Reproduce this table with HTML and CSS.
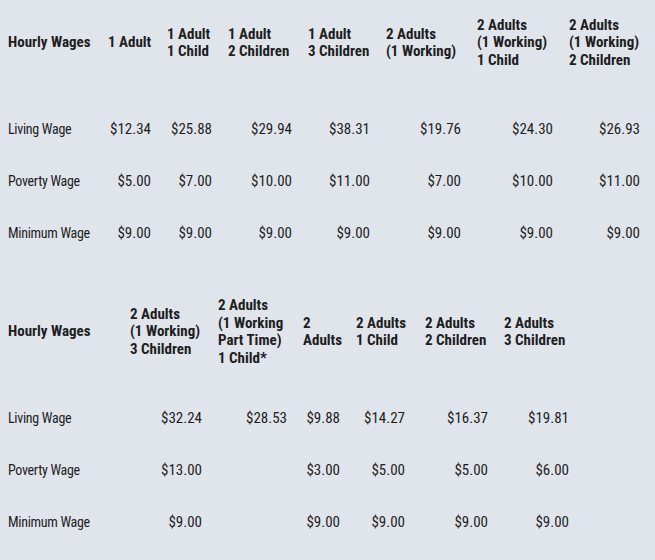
FILE: index.html
```html
<!DOCTYPE html>
<html lang="en">
<head>
<meta charset="utf-8">
<title>Hourly Wages</title>
<link rel="stylesheet" href="styles.css">
</head>
<body>
<table class="wages wages-1">
  <colgroup>
    <col class="c-100"><col class="c-59"><col class="c-61"><col class="c-80"><col class="c-78"><col class="c-91"><col class="c-92"><col class="c-87">
  </colgroup>
  <thead>
    <tr class="head-row">
      <th>Hourly Wages</th>
      <th>1 Adult</th>
      <th>1 Adult<br>1 Child</th>
      <th>1 Adult<br>2 Children</th>
      <th>1 Adult<br>3 Children</th>
      <th>2 Adults<br>(1 Working)</th>
      <th>2 Adults<br>(1 Working)<br>1 Child</th>
      <th>2 Adults<br>(1 Working)<br>2 Children</th>
    </tr>
  </thead>
  <tbody>
    <tr><td class="label">Living Wage</td><td>$12.34</td><td>$25.88</td><td>$29.94</td><td>$38.31</td><td>$19.76</td><td>$24.30</td><td>$26.93</td></tr>
    <tr><td class="label">Poverty Wage</td><td>$5.00</td><td>$7.00</td><td>$10.00</td><td>$11.00</td><td>$7.00</td><td>$10.00</td><td>$11.00</td></tr>
    <tr><td class="label">Minimum Wage</td><td>$9.00</td><td>$9.00</td><td>$9.00</td><td>$9.00</td><td>$9.00</td><td>$9.00</td><td>$9.00</td></tr>
  </tbody>
</table>

<table class="wages wages-2">
  <colgroup>
    <col class="c-122"><col class="c-88"><col class="c-85"><col class="c-53"><col class="c-67"><col class="c-81"><col class="c-81">
  </colgroup>
  <thead>
    <tr class="head-row">
      <th>Hourly Wages</th>
      <th>2 Adults<br>(1 Working)<br>3 Children</th>
      <th>2 Adults<br>(1 Working<br>Part Time)<br>1 Child*</th>
      <th>2<br>Adults</th>
      <th>2 Adults<br>1 Child</th>
      <th class="wide-left">2 Adults<br>2 Children</th>
      <th>2 Adults<br>3 Children</th>
    </tr>
  </thead>
  <tbody>
    <tr><td class="label">Living Wage</td><td>$32.24</td><td>$28.53</td><td>$9.88</td><td class="wide-right">$14.27</td><td>$16.37</td><td>$19.81</td></tr>
    <tr><td class="label">Poverty Wage</td><td>$13.00</td><td></td><td>$3.00</td><td class="wide-right">$5.00</td><td>$5.00</td><td>$6.00</td></tr>
    <tr><td class="label">Minimum Wage</td><td>$9.00</td><td></td><td>$9.00</td><td class="wide-right">$9.00</td><td>$9.00</td><td>$9.00</td></tr>
  </tbody>
</table>
</body>
</html>
```
FILE: styles.css
```css
html, body {
  margin: 0;
  padding: 0;
  background: #e0e4eb;
}

body {
  font-family: "Roboto Condensed", "Liberation Sans Narrow", sans-serif;
  color: #1e1e1e;
}

.wages {
  border-collapse: collapse;
  border-spacing: 0;
  table-layout: fixed;
}

.wages-1 { width: 648px; }
.wages-2 { width: 577px; margin-top: 13px; }

.c-100 { width: 100px; }
.c-59 { width: 59px; }
.c-61 { width: 61px; }
.c-80 { width: 80px; }
.c-78 { width: 78px; }
.c-91 { width: 91px; }
.c-92 { width: 92px; }
.c-87 { width: 87px; }
.c-122 { width: 122px; }
.c-88 { width: 88px; }
.c-85 { width: 85px; }
.c-53 { width: 53px; }
.c-67 { width: 67px; }
.c-81 { width: 81px; }

.wages th,
.wages td {
  padding: 0 8px;
  vertical-align: middle;
  white-space: nowrap;
}

.wages th {
  font-weight: bold;
  font-size: 15px;
  line-height: 17.5px;
  text-align: left;
}

.wages-1 .head-row { height: 103px; }
.wages-1 .head-row th { padding-bottom: 17px; }
.wages-2 .head-row { height: 120px; }

.wages td {
  height: 52px;
  font-size: 15px;
  line-height: 18px;
  text-align: right;
}

.wages td.label {
  text-align: left;
  font-size: 14px;
  letter-spacing: -0.3px;
}

.wages .wide-right { padding-right: 10px; }
.wages .wide-left { padding-left: 10px; }
```
